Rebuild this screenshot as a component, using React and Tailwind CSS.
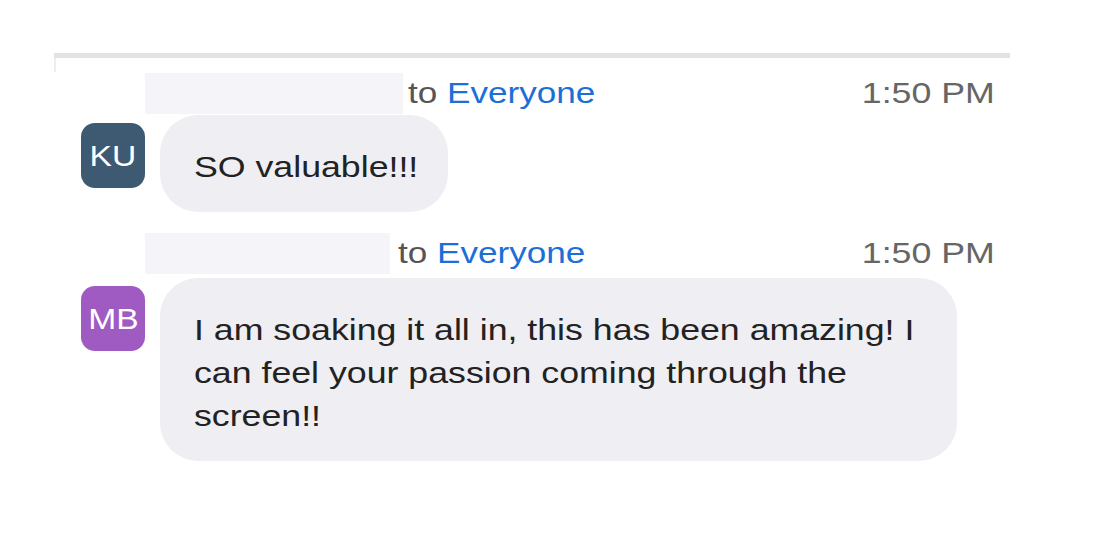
const messages = [
  {
    initials: 'KU',
    avatar: 'bg-[#3e5a73]',
    time: '1:50 PM',
    box: 'w-[258px]',
    toGap: 'ml-[5px]',
    rowGap: 'mt-0',
    bubbleGap: 'mt-[1px]',
    lines: ['SO valuable!!!'],
    bubble: 'w-[288px]',
  },
  {
    initials: 'MB',
    avatar: 'bg-[#a05bc2]',
    time: '1:50 PM',
    box: 'w-[245px]',
    toGap: 'ml-[8px]',
    rowGap: 'mt-[20px]',
    bubbleGap: 'mt-[4px]',
    lines: [
      'I am soaking it all in, this has been amazing! I',
      'can feel your passion coming through the',
      'screen!!',
    ],
    bubble: 'w-[797px]',
  },
];

function Message({ m }) {
  return (
    <div className={m.rowGap}>
      <div className="flex h-[42px] items-center pl-[91px] pr-[15px] text-[30px] leading-none">
        <div className={`h-[41px] ${m.box} shrink-0 bg-[#f5f5f9]`} />
        <span className={`${m.toGap} inline-block origin-left scale-x-[1.17] whitespace-nowrap text-[#555]`}>
          to <span className="text-[#1b6fd6]">Everyone</span>
        </span>
        <span className="ml-auto inline-block origin-right scale-x-[1.19] whitespace-nowrap text-[#666]">
          {m.time}
        </span>
      </div>
      <div className={`${m.bubbleGap} flex items-start pl-[27px]`}>
        <div
          className={`mt-[8px] flex h-[65px] w-[64px] shrink-0 items-center justify-center rounded-[14px] ${m.avatar} text-[30px] leading-none text-white`}
        >
          <span className="inline-block scale-x-[1.12]">{m.initials}</span>
        </div>
        <div
          className={`ml-[15px] ${m.bubble} rounded-[38px] bg-[#eeeef3] px-[34px] pt-[30px] pb-[24px] text-[30px] leading-[43px] text-[#222]`}
        >
          {m.lines.map((l, i) => (
            <div key={i} className="origin-left scale-x-[1.19] whitespace-nowrap">
              {l}
            </div>
          ))}
        </div>
      </div>
    </div>
  );
}

export default function App() {
  return (
    <div
      className="h-[547px] w-[1094px] bg-white pt-[53px]"
      style={{ fontFamily: '"Liberation Sans", Arial, sans-serif' }}
    >
      <div className="relative ml-[54px] w-[956px] border-t-[5px] border-t-[#e3e3e3] pt-[14px]">
        <div className="absolute top-0 left-0 h-[14px] w-[2px] bg-[#eeeeee]" />
        {messages.map((m, i) => (
          <Message key={i} m={m} />
        ))}
      </div>
    </div>
  );
}
